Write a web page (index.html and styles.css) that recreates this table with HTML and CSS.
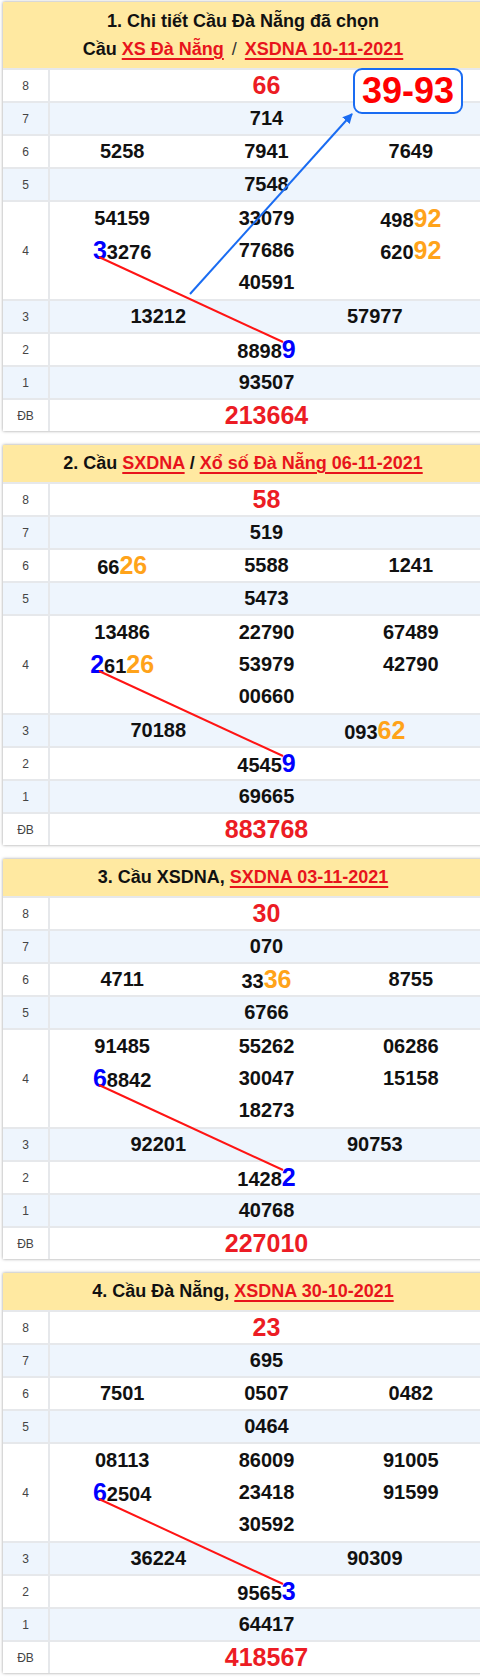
FILE: index.html
```html
<!DOCTYPE html>
<html lang="vi">
<head>
<meta charset="utf-8">
<title>Cầu Đà Nẵng</title>
<link rel="stylesheet" href="styles.css">
</head>
<body>
<div class="page">

<section class="cau">
  <div class="head two">
    <div>1. Chi tiết Cầu Đà Nẵng đã chọn</div>
    <div>Cầu <a href="#">XS Đà Nẵng</a> <span class="sl">/</span> <a href="#">XSDNA 10-11-2021</a></div>
  </div>
  <div class="row"><div class="lbl">8</div><div class="val c1"><span class="n red">66</span></div></div>
  <div class="row alt"><div class="lbl">7</div><div class="val c1"><span class="n">714</span></div></div>
  <div class="row"><div class="lbl">6</div><div class="val c3"><span class="n">5258</span><span class="n">7941</span><span class="n">7649</span></div></div>
  <div class="row alt"><div class="lbl">5</div><div class="val c1"><span class="n">7548</span></div></div>
  <div class="row r4"><div class="lbl">4</div><div class="val c3">
    <div class="stack"><span class="n">54159</span><span class="n"><span class="hb">3</span>3276</span></div>
    <div class="stack"><span class="n">33079</span><span class="n">77686</span><span class="n">40591</span></div>
    <div class="stack"><span class="n">498<span class="ho">92</span></span><span class="n">620<span class="ho">92</span></span></div>
  </div></div>
  <div class="row alt"><div class="lbl">3</div><div class="val c2"><span class="n">13212</span><span class="n">57977</span></div></div>
  <div class="row"><div class="lbl">2</div><div class="val c1"><span class="n">8898<span class="hb">9</span></span></div></div>
  <div class="row alt"><div class="lbl">1</div><div class="val c1"><span class="n">93507</span></div></div>
  <div class="row"><div class="lbl">ĐB</div><div class="val c1"><span class="n red">213664</span></div></div>
  <div class="result">39-93</div>
  <svg class="ov" width="480" height="429">
    <defs>
      <marker id="ah" viewBox="0 0 10 10" refX="9" refY="5" markerWidth="5" markerHeight="5" orient="auto">
        <path d="M0 0 L10 5 L0 10 Z" fill="#1a6cf2"/>
      </marker>
    </defs>
    <line x1="96" y1="255" x2="280" y2="340" class="lr"/>
    <line x1="187" y1="292" x2="349" y2="112" class="lb" marker-end="url(#ah)"/>
  </svg>
</section>

<section class="cau">
  <div class="head">
    <div>2. Cầu <a href="#">SXDNA</a> / <a href="#">Xổ số Đà Nẵng 06-11-2021</a></div>
  </div>
  <div class="row"><div class="lbl">8</div><div class="val c1"><span class="n red">58</span></div></div>
  <div class="row alt"><div class="lbl">7</div><div class="val c1"><span class="n">519</span></div></div>
  <div class="row"><div class="lbl">6</div><div class="val c3"><span class="n">66<span class="ho">26</span></span><span class="n">5588</span><span class="n">1241</span></div></div>
  <div class="row alt"><div class="lbl">5</div><div class="val c1"><span class="n">5473</span></div></div>
  <div class="row r4"><div class="lbl">4</div><div class="val c3">
    <div class="stack"><span class="n">13486</span><span class="n"><span class="hb">2</span>61<span class="ho">26</span></span></div>
    <div class="stack"><span class="n">22790</span><span class="n">53979</span><span class="n">00660</span></div>
    <div class="stack"><span class="n">67489</span><span class="n">42790</span></div>
  </div></div>
  <div class="row alt"><div class="lbl">3</div><div class="val c2"><span class="n">70188</span><span class="n">093<span class="ho">62</span></span></div></div>
  <div class="row"><div class="lbl">2</div><div class="val c1"><span class="n">4545<span class="hb">9</span></span></div></div>
  <div class="row alt"><div class="lbl">1</div><div class="val c1"><span class="n">69665</span></div></div>
  <div class="row"><div class="lbl">ĐB</div><div class="val c1"><span class="n red">883768</span></div></div>
  <svg class="ov" width="480" height="400">
    <line x1="96" y1="226" x2="280" y2="311" class="lr"/>
  </svg>
</section>

<section class="cau">
  <div class="head">
    <div>3. Cầu XSDNA, <a href="#">SXDNA 03-11-2021</a></div>
  </div>
  <div class="row"><div class="lbl">8</div><div class="val c1"><span class="n red">30</span></div></div>
  <div class="row alt"><div class="lbl">7</div><div class="val c1"><span class="n">070</span></div></div>
  <div class="row"><div class="lbl">6</div><div class="val c3"><span class="n">4711</span><span class="n">33<span class="ho">36</span></span><span class="n">8755</span></div></div>
  <div class="row alt"><div class="lbl">5</div><div class="val c1"><span class="n">6766</span></div></div>
  <div class="row r4"><div class="lbl">4</div><div class="val c3">
    <div class="stack"><span class="n">91485</span><span class="n"><span class="hb">6</span>8842</span></div>
    <div class="stack"><span class="n">55262</span><span class="n">30047</span><span class="n">18273</span></div>
    <div class="stack"><span class="n">06286</span><span class="n">15158</span></div>
  </div></div>
  <div class="row alt"><div class="lbl">3</div><div class="val c2"><span class="n">92201</span><span class="n">90753</span></div></div>
  <div class="row"><div class="lbl">2</div><div class="val c1"><span class="n">1428<span class="hb">2</span></span></div></div>
  <div class="row alt"><div class="lbl">1</div><div class="val c1"><span class="n">40768</span></div></div>
  <div class="row"><div class="lbl">ĐB</div><div class="val c1"><span class="n red">227010</span></div></div>
  <svg class="ov" width="480" height="400">
    <line x1="96" y1="226" x2="280" y2="311" class="lr"/>
  </svg>
</section>

<section class="cau">
  <div class="head">
    <div>4. Cầu Đà Nẵng, <a href="#">XSDNA 30-10-2021</a></div>
  </div>
  <div class="row"><div class="lbl">8</div><div class="val c1"><span class="n red">23</span></div></div>
  <div class="row alt"><div class="lbl">7</div><div class="val c1"><span class="n">695</span></div></div>
  <div class="row"><div class="lbl">6</div><div class="val c3"><span class="n">7501</span><span class="n">0507</span><span class="n">0482</span></div></div>
  <div class="row alt"><div class="lbl">5</div><div class="val c1"><span class="n">0464</span></div></div>
  <div class="row r4"><div class="lbl">4</div><div class="val c3">
    <div class="stack"><span class="n">08113</span><span class="n"><span class="hb">6</span>2504</span></div>
    <div class="stack"><span class="n">86009</span><span class="n">23418</span><span class="n">30592</span></div>
    <div class="stack"><span class="n">91005</span><span class="n">91599</span></div>
  </div></div>
  <div class="row alt"><div class="lbl">3</div><div class="val c2"><span class="n">36224</span><span class="n">90309</span></div></div>
  <div class="row"><div class="lbl">2</div><div class="val c1"><span class="n">9565<span class="hb">3</span></span></div></div>
  <div class="row alt"><div class="lbl">1</div><div class="val c1"><span class="n">64417</span></div></div>
  <div class="row"><div class="lbl">ĐB</div><div class="val c1"><span class="n red">418567</span></div></div>
  <svg class="ov" width="480" height="400">
    <line x1="96" y1="226" x2="280" y2="311" class="lr"/>
  </svg>
</section>

</div>
</body>
</html>
```

FILE: styles.css
```css
* { box-sizing: border-box; }
html, body { margin: 0; padding: 0; }
body {
  width: 480px;
  overflow-x: hidden;
  background: #fff;
  font-family: "Liberation Sans", Arial, sans-serif;
  color: #111;
}
.page {
  display: flex;
  flex-direction: column;
  gap: 14px;
  padding: 2px 0 4px 3px;
}
.cau {
  position: relative;
  width: 480px;
  background: #fff;
  box-shadow: 0 0 3px rgba(0, 0, 0, 0.4);
}
.head {
  background: #ffe9a1;
  text-align: center;
  font-weight: bold;
  font-size: 18px;
  line-height: 28px;
  padding: 4px 0 5px;
  color: #111;
}
.head.two { padding: 5px 0 5px; }
.head a {
  color: #e8141c;
  text-decoration: underline;
  text-decoration-thickness: 2px;
  text-underline-offset: 3px;
}
.head .sl { font-weight: normal; color: #333; padding: 0 3px; }
.row {
  display: grid;
  grid-template-columns: 47px 1fr;
  height: 33px;
  border-top: 2px solid #e6e8eb;
  background: #fff;
}
.row.alt { background: #eef5fd; }
.row.r4 { height: 99px; }
.lbl {
  display: flex;
  align-items: center;
  justify-content: center;
  font-size: 12px;
  color: #444;
  border-right: 2px solid #e6e8eb;
}
.val {
  display: grid;
  align-items: center;
  justify-items: center;
  font-weight: bold;
  font-size: 20px;
  color: #111;
}
.c1 { grid-template-columns: 1fr; }
.c2 { grid-template-columns: repeat(2, 1fr); }
.c3 { grid-template-columns: repeat(3, 1fr); }
.r4 .val { align-items: start; }
.stack {
  display: flex;
  flex-direction: column;
  align-items: center;
}
.stack .n {
  display: block;
  height: 32px;
  line-height: 32px;
}
.n { white-space: nowrap; }
.n.red { color: #ec1c24; font-size: 25px; }
.ho { color: #ffa31a; font-size: 25px; }
.hb { color: #0000ff; font-size: 25px; }
.result {
  position: absolute;
  left: 350px;
  top: 66px;
  width: 110px;
  height: 46px;
  border: 2px solid #1a6cf2;
  border-radius: 9px;
  background: #fff;
  color: #ff0000;
  font-weight: bold;
  font-size: 36px;
  line-height: 42px;
  text-align: center;
}
.ov {
  position: absolute;
  left: 0;
  top: 0;
  pointer-events: none;
}
.lr { stroke: #ff1414; stroke-width: 2; }
.lb { stroke: #1a6cf2; stroke-width: 2; }
```
